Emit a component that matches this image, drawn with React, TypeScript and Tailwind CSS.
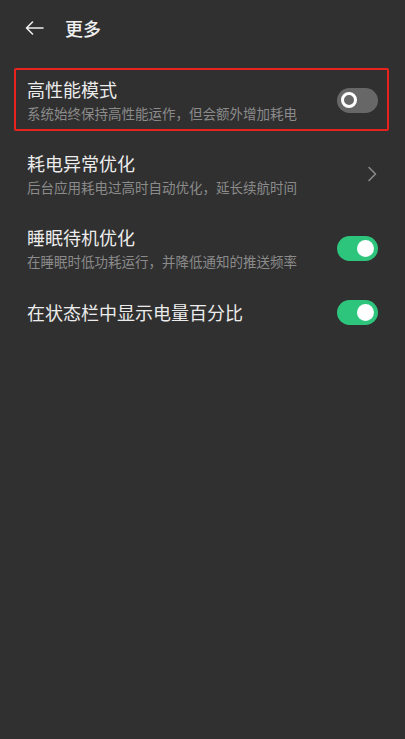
// 电池 - 更多设置页面

const FONT = '"Noto Sans CJK SC", "Noto Sans", sans-serif';

function Toggle({ on }: { on: boolean }) {
  if (on) {
    return (
      <div className="w-[41px] h-[25px] rounded-full bg-[#2dc57c] flex items-center justify-end pr-[4px] shrink-0">
        <div className="w-[17px] h-[17px] rounded-full bg-white" />
      </div>
    );
  }
  return (
    <div className="w-[41px] h-[25px] rounded-full bg-[#676767] flex items-center pl-[4px] shrink-0">
      <div className="w-[16px] h-[16px] rounded-full border-[3px] border-white bg-[#676767]" />
    </div>
  );
}

function Chevron() {
  return (
    <svg width="10" height="16" viewBox="0 0 10 16" className="shrink-0 mr-[1px]">
      <path d="M2 1.5 L8.5 8 L2 14.5" fill="none" stroke="#8a8a8a" strokeWidth="1.6" strokeLinecap="round" strokeLinejoin="round" />
    </svg>
  );
}

interface LigneProps {
  titre: string;
  sousTitre?: string;
  droite: React.ReactNode;
}

function Ligne({ titre, sousTitre, droite }: LigneProps) {
  return (
    <div className={`flex items-center px-[27px] ${sousTitre ? 'h-[74px]' : 'h-[54px]'}`}>
      <div className="flex-1 flex flex-col">
        <span className="text-[18px] leading-[22px] text-[#ececec]">{titre}</span>
        {sousTitre && (
          <span className="text-[13.5px] leading-[18px] mt-[4px] text-[#8b8b8b]">{sousTitre}</span>
        )}
      </div>
      {droite}
    </div>
  );
}

export default function App() {
  return (
    <div className="w-[405px] h-[739px] bg-[#303030]" style={{ fontFamily: FONT }}>
      <div className="h-[56px] flex items-center pl-[25px]">
        <svg width="19" height="14" viewBox="0 0 19 14">
          <path d="M18 7 H1.5 M7.5 1 L1.5 7 L7.5 13" fill="none" stroke="#ededed" strokeWidth="1.6" strokeLinecap="round" strokeLinejoin="round" />
        </svg>
        <span className="ml-[21px] text-[18px] font-medium text-[#f0f0f0]">更多</span>
      </div>

      <div className="mt-[7px]">
        <div className="relative">
          <Ligne titre="高性能模式" sousTitre="系统始终保持高性能运作，但会额外增加耗电" droite={<Toggle on={false} />} />
          <div className="absolute left-[14px] right-[16px] top-[5px] bottom-[6px] border-2 border-[#e8231d] rounded-[2px] pointer-events-none" />
        </div>
        <Ligne titre="耗电异常优化" sousTitre="后台应用耗电过高时自动优化，延长续航时间" droite={<Chevron />} />
        <Ligne titre="睡眠待机优化" sousTitre="在睡眠时低功耗运行，并降低通知的推送频率" droite={<Toggle on />} />
        <Ligne titre="在状态栏中显示电量百分比" droite={<Toggle on />} />
      </div>
    </div>
  );
}
